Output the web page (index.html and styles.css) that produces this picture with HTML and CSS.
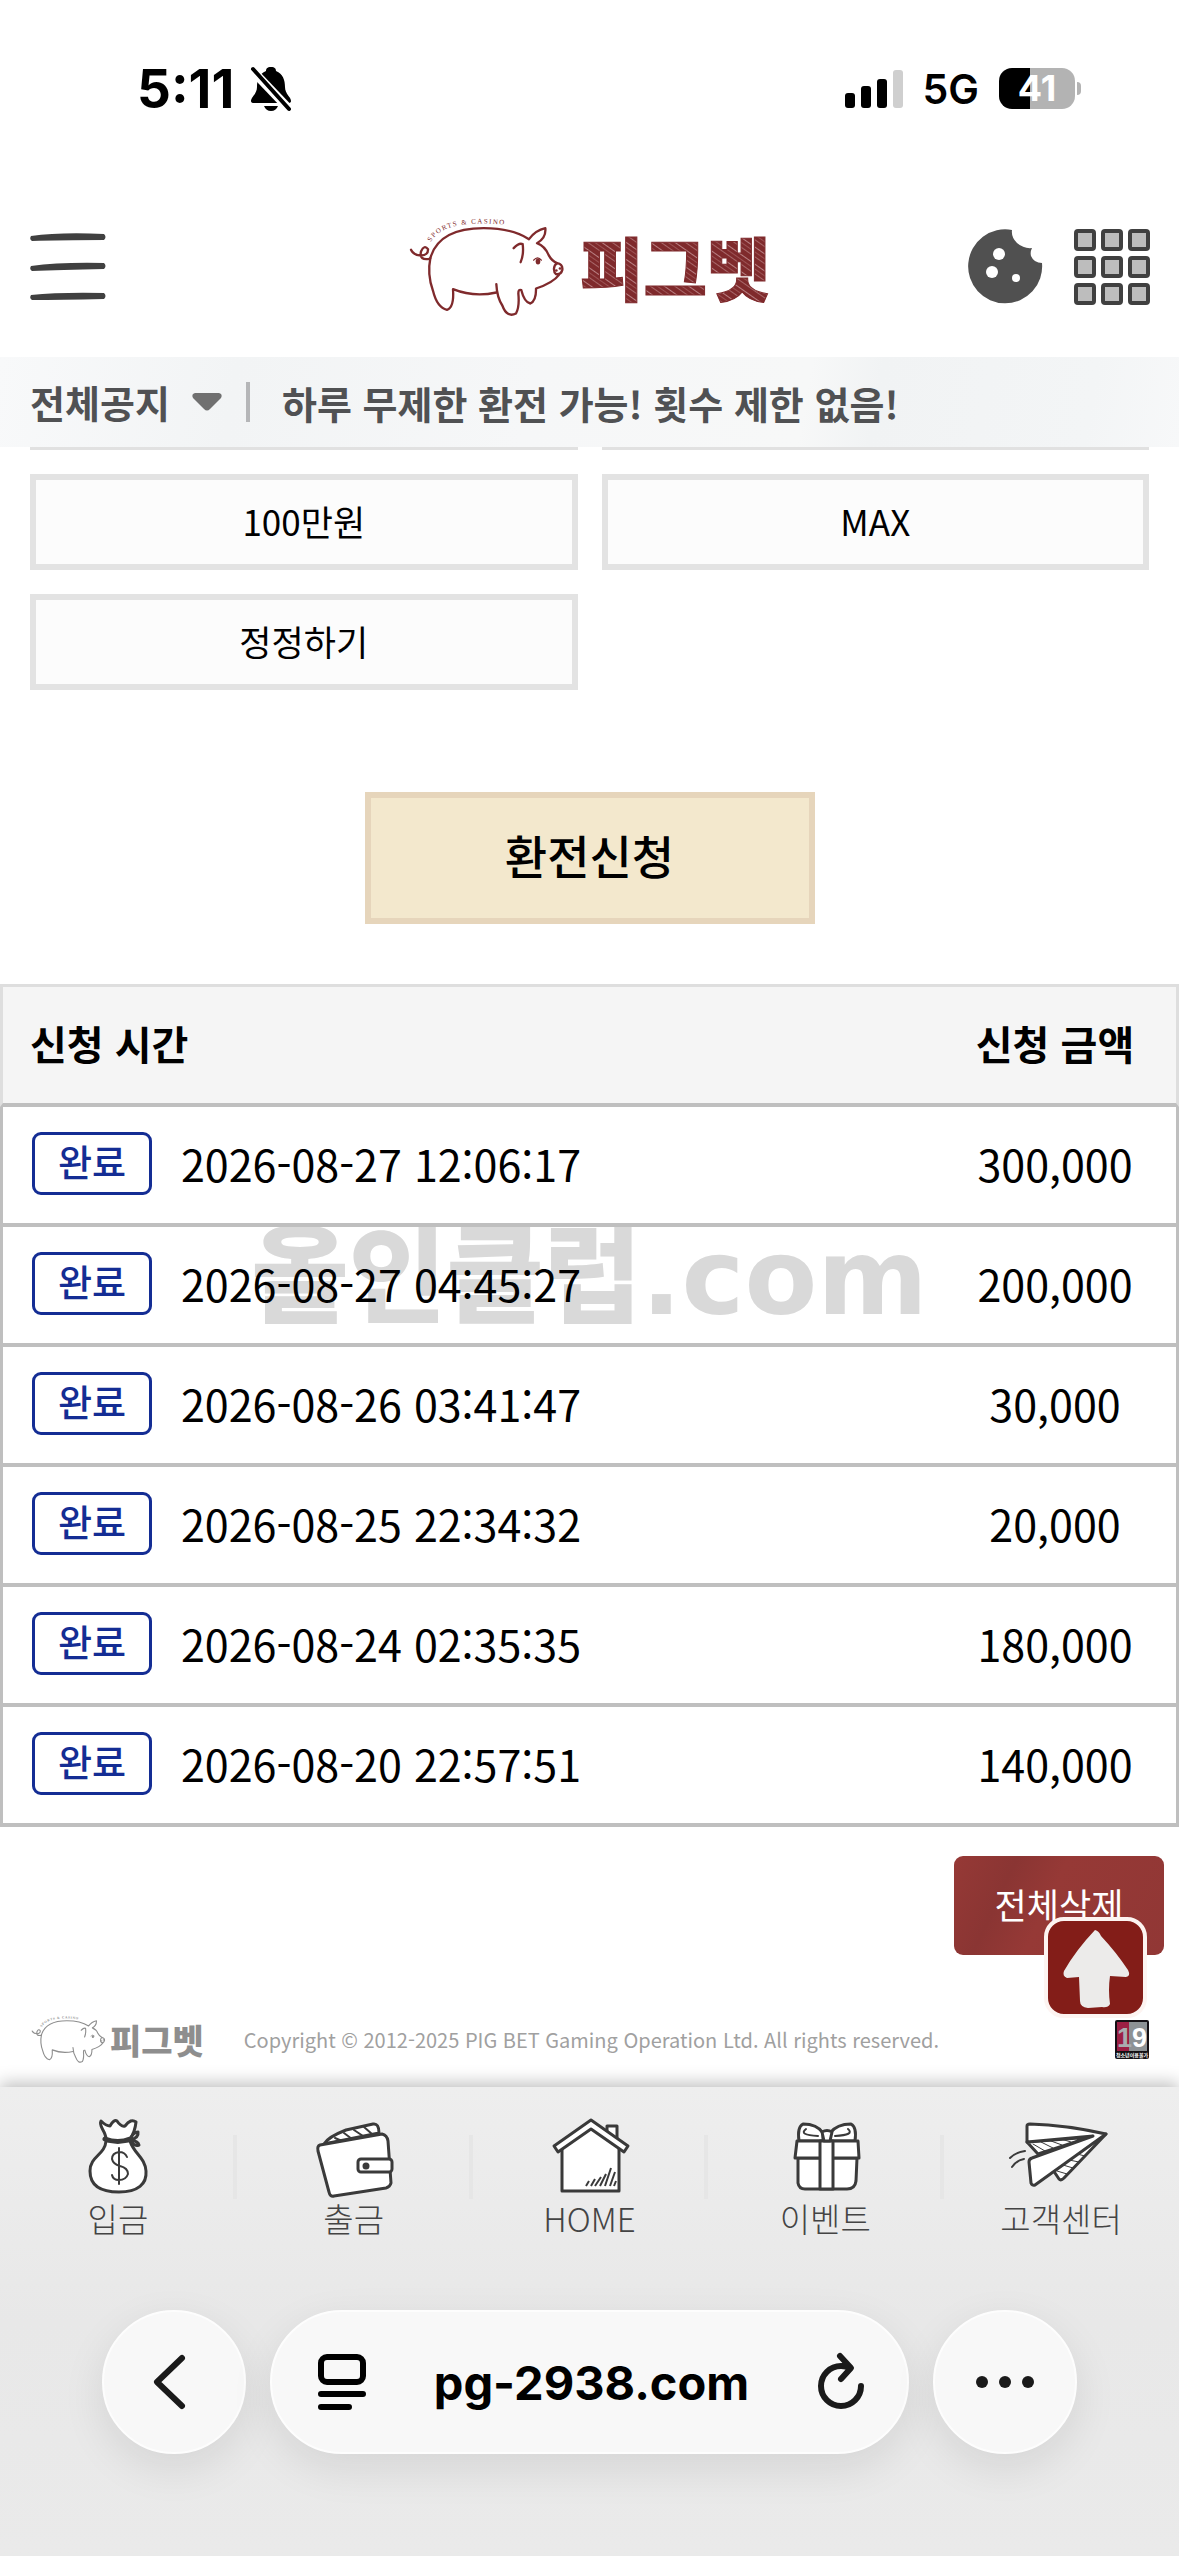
FILE: index.html
```
<!DOCTYPE html>
<html lang="ko">
<head>
    <meta charset="UTF-8">
    <meta name="viewport" content="width=device-width, initial-scale=1.0">
    <title>피그벳</title>
    <link rel="stylesheet" href="styles.css">
</head>
<body>
    <!-- shared logo drawing -->
    <svg class="defs" width="0" height="0" aria-hidden="true">
        <defs>
            <path id="backArc" d="M122 124 C150 70 240 60 360 74"/>
            <pattern id="hatch" width="14" height="14" patternUnits="userSpaceOnUse" patternTransform="rotate(35)">
                <rect width="14" height="14" fill="#7f2a2c"/>
                <rect width="14" height="1" y="2" fill="#b98083"/>
                <rect width="14" height="1" y="6" fill="#9c5254"/>
                <rect width="14" height="1" y="10" fill="#a8686a"/>
            </pattern>
            <symbol id="pig" viewBox="50 40 480 320">
                <g fill="none" stroke="currentColor" stroke-width="7" stroke-linecap="round" stroke-linejoin="round">
                    <path d="M120 172 C138 108 200 82 280 82 C335 82 385 95 416 115 Q436 88 465 82 Q468 112 440 127 Q464 136 475 163 Q484 180 500 187"/>
                    <path d="M500 187 Q518 190 516 207 Q512 222 497 220 C488 212 489 193 500 187 M506 222 Q488 246 437 263 Q438 300 420 308 Q402 304 393 268 Q384 264 384 278 Q388 318 377 338 Q350 352 336 314 Q320 290 318 250"/>
                    <path d="M318 275 Q250 290 188 265 Q192 320 170 327 Q140 320 128 270 Q110 220 120 172"/>
                    <path d="M118 174 Q86 180 92 152 Q102 130 113 145 Q114 163 92 164 Q70 164 62 147"/>
                    <path d="M370 142 Q386 125 397 130 Q401 160 391 184"/>
                    <path d="M430 178 Q442 164 453 178" stroke-width="4"/>
                </g>
                <ellipse cx="443" cy="182" rx="7" ry="9" fill="currentColor"/>
                <circle cx="498" cy="209" r="4" fill="currentColor"/>
                <circle cx="509" cy="203" r="4" fill="currentColor"/>
                <text class="arc-text" fill="currentColor"><textPath href="#backArc">SPORTS &amp; CASINO</textPath></text>
            </symbol>
        </defs>
    </svg>

    <div class="status-bar">
        <div class="status-left">
            <span>5:11</span>
            <svg width="42" height="46" viewBox="0 0 42 46">
                <path d="M21 1 C25 1 26 3 26 5 C33 8 35 14 35 21 C35 28 41 31 41 35 Q41 37 38 37 H4 Q1 37 1 35 C1 31 7 28 7 21 C7 14 9 8 16 5 C16 3 17 1 21 1Z"/>
                <path d="M14 40 H28 Q26 45 21 45 Q16 45 14 40Z"/>
                <path d="M1 3 L40 44" stroke="#fff" stroke-width="9"/>
                <path d="M3 3 L39 43" stroke="#000" stroke-width="4" stroke-linecap="round"/>
            </svg>
        </div>
        <div class="status-right">
            <svg width="58" height="38" viewBox="0 0 58 38">
                <rect x="0" y="23" width="10" height="15" rx="3"/>
                <rect x="16" y="16" width="10" height="22" rx="3"/>
                <rect x="32" y="9" width="10" height="29" rx="3"/>
                <rect x="48" y="0" width="10" height="38" rx="3" fill="#cfcfcf"/>
            </svg>
            <span class="network">5G</span>
            <div class="battery">41</div>
        </div>
    </div>

    <header class="header">
        <button class="icon-btn" aria-label="메뉴">
            <svg width="76" height="76" viewBox="0 0 76 76" fill="#404040">
                <path d="M1 7 Q30 3 74 5 Q77 8 74 11 Q30 11 2 12 Q-1 10 1 7Z"/>
                <path d="M1 37 Q30 33 74 34 Q77 37 74 40 Q30 41 2 42 Q-1 40 1 37Z"/>
                <path d="M1 66 Q30 63 74 64 Q77 67 74 70 Q30 71 2 71 Q-1 69 1 66Z"/>
            </svg>
        </button>
        <a class="logo" href="#" aria-label="피그벳">
            <svg width="160" height="107"><use href="#pig"/></svg>
            <svg width="196" height="90" viewBox="0 0 196 90">
                <text class="logo-text" x="3" y="74" fill="url(#hatch)" stroke="#7f2a2c">피그벳</text>
            </svg>
        </a>
        <div class="header-right">
            <button class="icon-btn" aria-label="쿠키">
                <svg width="76" height="76" viewBox="0 0 76 76">
                    <path d="M45 1 A37 37 0 1 0 75 34 Q67 34 64 27 Q63 23 65 19 Q57 20 50 14 Q44 8 45 1Z" fill="#505050"/>
                    <circle cx="32" cy="25" r="6" fill="#fff"/>
                    <circle cx="25" cy="43" r="6" fill="#fff"/>
                    <circle cx="49" cy="49" r="4" fill="#fff"/>
                </svg>
            </button>
            <button class="icon-btn" aria-label="전체 메뉴">
                <svg width="76" height="76" viewBox="0 0 76 76" fill="#bdbdbd" stroke="#404040" stroke-width="4">
                    <rect x="2" y="2" width="18" height="18" rx="2"/><rect x="29" y="2" width="18" height="18" rx="2"/><rect x="56" y="2" width="18" height="18" rx="2"/>
                    <rect x="2" y="29" width="18" height="18" rx="2"/><rect x="29" y="29" width="18" height="18" rx="2"/><rect x="56" y="29" width="18" height="18" rx="2"/>
                    <rect x="2" y="56" width="18" height="18" rx="2"/><rect x="29" y="56" width="18" height="18" rx="2"/><rect x="56" y="56" width="18" height="18" rx="2"/>
                </svg>
            </button>
        </div>
    </header>

    <div class="notice">
        <select class="notice-select" aria-label="공지 종류">
            <option>전체공지</option>
        </select>
        <svg width="30" height="18" viewBox="0 0 30 18"><path d="M3 0 H27 Q31 1 29 5 L18 16 Q15 19 12 16 L1 5 Q-1 1 3 0Z" fill="#707070"/></svg>
        <span class="notice-line"></span>
        <span class="notice-text">하루 무제한 환전 가능! 횟수 제한 없음!</span>
    </div>

    <main>
        <div class="amounts">
            <span class="cut"></span>
            <span class="cut"></span>
            <button class="amount-btn">100만원</button>
            <button class="amount-btn">MAX</button>
            <button class="amount-btn">정정하기</button>
        </div>

        <button class="submit-btn">환전신청</button>

        <div class="history">
            <div class="watermark" aria-hidden="true">올인클럽<span>.com</span></div>
            <table>
                <thead>
                    <tr><th>신청 시간</th><th class="money">신청 금액</th></tr>
                </thead>
                <tbody>
                    <tr><td><div class="when"><span class="badge">완료</span>2026-08-27 12:06:17</div></td><td class="money">300,000</td></tr>
                    <tr><td><div class="when"><span class="badge">완료</span>2026-08-27 04:45:27</div></td><td class="money">200,000</td></tr>
                    <tr><td><div class="when"><span class="badge">완료</span>2026-08-26 03:41:47</div></td><td class="money">30,000</td></tr>
                    <tr><td><div class="when"><span class="badge">완료</span>2026-08-25 22:34:32</div></td><td class="money">20,000</td></tr>
                    <tr><td><div class="when"><span class="badge">완료</span>2026-08-24 02:35:35</div></td><td class="money">180,000</td></tr>
                    <tr><td><div class="when"><span class="badge">완료</span>2026-08-20 22:57:51</div></td><td class="money">140,000</td></tr>
                </tbody>
            </table>
        </div>

        <div class="actions">
            <button class="delete-btn">전체삭제</button>
            <button class="top-btn" aria-label="맨 위로">
                <svg width="68" height="80" viewBox="0 0 68 80"><path d="M33 2 Q37 3 39 8 Q54 24 66 42 Q69 48 64 49 L48 48 Q46 62 48 76 Q46 80 40 79 L26 80 Q18 79 18 73 L17 49 L5 50 Q0 48 2 43 Q14 22 33 2Z" fill="#ecebea"/></svg>
            </button>
        </div>
    </main>

    <footer class="footer">
        <div class="footer-logo">
            <svg width="77" height="51"><use href="#pig"/></svg>
            <span>피그벳</span>
        </div>
        <p>Copyright © 2012-2025 PIG BET Gaming Operation Ltd. All rights reserved.</p>
        <svg width="34" height="39" viewBox="0 0 34 39">
            <rect width="34" height="39" rx="2" fill="#141014"/>
            <rect x="2" y="2" width="12" height="29" fill="#9c1f44"/>
            <rect x="14" y="2" width="18" height="29" fill="#8d9295"/>
            <text class="adult-num" x="17" y="27" text-anchor="middle"><tspan fill="#a9adaf">1</tspan><tspan fill="#fff">9</tspan></text>
            <text class="adult-text" x="17" y="37" fill="#fff" text-anchor="middle">청소년이용불가</text>
        </svg>
    </footer>

    <div class="bottom">
        <nav class="tabs">
            <a href="#">
                <svg width="100" height="84" viewBox="0 0 100 84" fill="#fff" stroke="#3a3a3a" stroke-width="3" stroke-linecap="round" stroke-linejoin="round">
                    <path d="M38 26 C38 18 30 13 33 8 Q38 13 42 13 Q46 6 49 8 Q53 14 57 13 Q63 5 68 9 Q67 19 62 26"/>
                    <path d="M38 28 C37 42 22 43 22 58 C22 74 35 79 51 79 C70 79 79 71 78 58 C77 44 66 41 62 28Z"/>
                    <path d="M37 26 Q50 31 62 26" fill="none" stroke-width="5"/>
                    <path d="M62 27 Q65 19 70 19 Q71 25 62 27 Q70 28 71 32 Q66 34 62 27Z"/>
                    <path d="M59 44 Q57 39 51 39 Q44 40 44 46 Q45 51 52 53 Q60 55 60 61 Q58 67 51 67 Q45 67 44 62 M51 35 V71" fill="none" stroke-width="2"/>
                </svg>
                입금
            </a>
            <a href="#">
                <svg width="100" height="84" viewBox="0 0 100 84" fill="#fff" stroke="#3a3a3a" stroke-width="3" stroke-linecap="round" stroke-linejoin="round">
                    <path d="M20 31 Q24 24 42 17 L69 11 Q75 10 75 20Z"/>
                    <path d="M31 25 L38 28 M40 20 L48 26 M50 17 L59 23 M60 14 L68 21" stroke-width="2"/>
                    <path d="M16 32 L78 21 Q83 22 84 28 L87 70 Q86 74 82 75 L30 83 Q26 84 25 79 L14 38 Q13 33 16 32Z"/>
                    <rect x="54" y="46" width="34" height="13" rx="3"/>
                    <circle cx="62" cy="53" r="2" fill="#3a3a3a"/>
                </svg>
                출금
            </a>
            <a href="#">
                <svg width="100" height="84" viewBox="0 0 100 84" fill="#fff" stroke="#3a3a3a" stroke-width="3" stroke-linejoin="round">
                    <path d="M23 34 V78 H80 V34 L52 12Z"/>
                    <path d="M68 26 V13 H78 V30"/>
                    <path d="M52 7 L89 33 L85 39 L52 16 L19 39 L15 33Z"/>
                    <path d="M47 73 L50 68 M52 73 L56 66 M56 73 L62 64 M61 73 L67 61 M66 73 L72 55 M71 73 L76 59 M75 73 L77 68" stroke-width="2"/>
                </svg>
                HOME
            </a>
            <a href="#">
                <svg width="100" height="84" viewBox="0 0 100 84" fill="#fff" stroke="#3a3a3a" stroke-width="3" stroke-linecap="round" stroke-linejoin="round">
                    <path d="M24 28 Q22 14 28 11 Q42 11 48 20 V28Z M80 28 Q82 14 76 11 Q62 11 55 20 V28Z"/>
                    <path d="M31 16 Q23 22 43 23 M73 16 Q80 22 60 23" fill="none" stroke-width="2"/>
                    <path d="M23 45 V70 Q24 76 30 76 H72 Q80 76 81 68 L82 45Z"/>
                    <path d="M22 28 H83 L84 45 H20Z"/>
                    <path d="M45 28 H58 V76 H45Z"/>
                    <path d="M47 19 Q52 16 57 19 L55 28 H49Z"/>
                </svg>
                이벤트
            </a>
            <a href="#">
                <svg width="100" height="84" viewBox="0 0 100 84" fill="#fff" stroke="#3a3a3a" stroke-width="3" stroke-linecap="round" stroke-linejoin="round">
                    <path d="M42 57 L48 66 Q50 68 53 65 L95 21Z"/>
                    <path d="M46 58 L56 61 M52 52 L62 55 M58 47 L68 49 M66 41 L74 43" stroke-width="1"/>
                    <path d="M16 29 L27 41 L80 24Z"/>
                    <path d="M22 31 L34 38 M30 29 L42 35 M40 28 L51 32 M50 26 L60 29" stroke-width="1"/>
                    <path d="M16 13 Q16 11 19 11 Q55 12 95 21 L24 72 Q21 73 20 70 L18 49 Q18 46 21 45 L82 23 L16 29Z"/>
                    <path d="M-1 45 Q5 39 14 38 M1 54 Q6 47 13 46" fill="none" stroke-width="2"/>
                </svg>
                고객센터
            </a>
        </nav>

        <div class="toolbar">
            <button class="round-btn" aria-label="뒤로">
                <svg width="60" height="60" viewBox="0 0 60 60" fill="none" stroke="#1a1a1a" stroke-width="6" stroke-linecap="round" stroke-linejoin="round"><path d="M38 6 L13 30 L38 54"/></svg>
            </button>
            <div class="address">
                <svg width="48" height="56" viewBox="0 0 48 56" fill="none" stroke="#000" stroke-width="6" stroke-linecap="round">
                    <rect x="3" y="3" width="42" height="25" rx="6"/>
                    <path d="M3 40 H45 M3 53 H31"/>
                </svg>
                <input type="text" value="pg-2938.com" aria-label="주소">
                <button class="icon-btn" aria-label="새로고침">
                    <svg width="48" height="56" viewBox="0 0 48 56" fill="none" stroke="#1a1a1a" stroke-width="6" stroke-linecap="round" stroke-linejoin="round"><path d="M33 14 Q29 12 24 12 A20 20 0 1 0 44 32 M23 2 L34 14 L24 25"/></svg>
                </button>
            </div>
            <button class="round-btn" aria-label="더보기">
                <svg width="72" height="14" viewBox="0 0 72 14" fill="#1a1a1a"><circle cx="13" cy="7" r="6"/><circle cx="36" cy="7" r="6"/><circle cx="59" cy="7" r="6"/></svg>
            </button>
        </div>
    </div>
</body>
</html>
```

FILE: styles.css
```
* {
    box-sizing: border-box;
}
body {
    display: flex;
    flex-direction: column;
    min-height: 100vh;
    margin: 0;
    background: #fff;
    color: #000;
    font-family: "Noto Sans CJK KR", sans-serif;
}
button {
    padding: 0;
    border: 0;
    background: none;
    color: inherit;
    font-family: inherit;
    cursor: pointer;
}
a {
    color: inherit;
    text-decoration: none;
}
svg {
    display: block;
    flex: none;
    overflow: visible;
}
.defs {
    position: absolute;
}

/* status bar */
.status-bar {
    display: flex;
    justify-content: space-between;
    align-items: center;
    height: 177px;
    padding: 0 104px 0 137px;
    font-family: Inter, sans-serif;
    font-weight: 700;
}
.status-left,
.status-right {
    display: flex;
    align-items: center;
}
.status-left {
    gap: 16px;
    font-size: 53px;
}
.status-right {
    gap: 20px;
}
.network {
    font-size: 41px;
    font-weight: 600;
}
.battery {
    position: relative;
    width: 76px;
    height: 41px;
    border-radius: 13px;
    background: linear-gradient(90deg, #000 41%, #b3b3b3 41%);
    color: #fff;
    font-size: 36px;
    line-height: 41px;
    text-align: center;
}
.battery::after {
    content: "";
    position: absolute;
    top: 14px;
    right: -6px;
    width: 4px;
    height: 13px;
    border-radius: 0 4px 4px 0;
    background: #b3b3b3;
}

/* header */
.header {
    display: grid;
    grid-template-columns: 1fr auto 1fr;
    align-items: center;
    height: 180px;
    padding: 0 29px 0 30px;
}
.icon-btn {
    justify-self: start;
}
.logo {
    display: flex;
    align-items: center;
    gap: 10px;
    color: #7f2a2c;
}
.logo-text {
    font-size: 69px;
    font-weight: 900;
    stroke-width: 1px;
}
.arc-text {
    font-family: "Liberation Serif", serif;
    font-size: 21px;
    letter-spacing: 4px;
}
.header-right {
    display: flex;
    justify-content: flex-end;
    gap: 31px;
}

/* notice */
.notice {
    display: flex;
    align-items: center;
    height: 90px;
    padding: 0 30px;
    background: linear-gradient(100deg, #f8f9fa 0%, #f2f4f5 20%, #f6f7f8 45%, #f7f8f8 68%, #f1f3f4 74%, #f3f5f6 92%, #f7f8f9 100%);
    color: #505153;
    font-size: 38px;
    font-weight: 700;
}
.notice-select {
    appearance: none;
    margin-right: 22px;
    padding: 0 0 2px;
    border: 0;
    background: none;
    color: inherit;
    font: inherit;
}
.notice-line {
    width: 4px;
    height: 40px;
    margin: 0 32px 0 24px;
    background: #b5b6b8;
}

/* withdrawal form */
.amounts {
    display: grid;
    grid-template-columns: 1fr 1fr;
    gap: 24px;
    padding: 0 30px;
}
.cut {
    height: 3px;
    background: #e1e1e1;
}
.amount-btn {
    height: 96px;
    padding: 0 0 4px;
    border: 6px solid #e3e3e3;
    background: #fcfcfc;
    font-size: 35px;
}
.submit-btn {
    display: block;
    width: 450px;
    height: 132px;
    margin: 102px auto 60px;
    padding: 0 0 8px;
    border: 6px solid #e6d5bb;
    background: #f3e8cd;
    font-size: 46px;
    font-weight: 500;
}

/* history table */
.history {
    position: relative;
}
.watermark {
    position: absolute;
    top: 214px;
    left: 0;
    right: 0;
    display: flex;
    justify-content: center;
    align-items: baseline;
    color: #d9d9d9;
    font-size: 106px;
    font-weight: 900;
    line-height: 140px;
}
.watermark span {
    font-family: "DejaVu Sans", sans-serif;
    font-weight: 700;
}
table {
    position: relative;
    width: 100%;
    border-collapse: separate;
    border-spacing: 0;
}
th {
    height: 123px;
    padding: 0 0 4px 27px;
    border-top: 3px solid #dedede;
    border-bottom: 4px solid #bfbfbf;
    background: #f5f5f5;
    font-size: 40px;
    font-weight: 700;
    text-align: left;
}
td {
    height: 120px;
    padding: 0 0 4px 29px;
    border-bottom: 4px solid #bfbfbf;
    font-size: 43px;
    line-height: 58px;
}
th:first-child {
    border-left: 3px solid #dedede;
}
th:last-child {
    border-right: 3px solid #dedede;
}
td:first-child {
    border-left: 3px solid #bfbfbf;
}
td:last-child {
    border-right: 3px solid #bfbfbf;
}
.money {
    width: 245px;
    padding-left: 0;
    text-align: center;
}
.when {
    display: flex;
    align-items: center;
    gap: 29px;
}
.badge {
    width: 120px;
    height: 63px;
    border: 3px solid #142d94;
    border-radius: 9px;
    color: #142d94;
    font-size: 37px;
    font-weight: 500;
    line-height: 53px;
    text-align: center;
}

/* delete and scroll-to-top */
.actions {
    position: relative;
    display: flex;
    justify-content: flex-end;
    padding: 29px 15px 0;
}
.delete-btn {
    width: 210px;
    height: 99px;
    padding: 0 0 4px;
    border-radius: 9px;
    background: linear-gradient(115deg, #963936 0%, #8a3533 25%, #963936 45%, #913735 100%);
    color: #fff;
    font-size: 35px;
}
.top-btn {
    position: absolute;
    top: 90px;
    right: 32px;
    display: flex;
    justify-content: center;
    align-items: center;
    width: 103px;
    height: 101px;
    border: 4px solid #fdf4f1;
    border-radius: 20px;
    background: #831d18;
}

/* footer */
.footer {
    display: flex;
    align-items: center;
    padding: 59px 30px 22px;
    color: #a0a0a0;
    font-size: 20px;
}
.footer p {
    flex: 1;
    margin: 0 0 0 40px;
}
.footer-logo {
    display: flex;
    align-items: center;
    gap: 3px;
    color: #8e8e8e;
    font-size: 34px;
    font-weight: 900;
    line-height: 50px;
}
.adult-num {
    font-family: "Liberation Sans", sans-serif;
    font-size: 27px;
    font-weight: 700;
}
.adult-text {
    font-size: 5px;
    font-weight: 700;
}

/* bottom area */
.bottom {
    flex: 1;
    background: linear-gradient(#eee, #e8e8e8 50%, #eaeaea);
    box-shadow: 0 -4px 16px rgba(0, 0, 0, 0.25);
}
.tabs {
    display: flex;
    padding-top: 26px;
}
.tabs a {
    position: relative;
    display: flex;
    flex: 1;
    flex-direction: column;
    align-items: center;
    color: #444;
    font-size: 33px;
    font-weight: 300;
    line-height: 42px;
}
.tabs a + a::before {
    content: "";
    position: absolute;
    top: 22px;
    left: -3px;
    width: 4px;
    height: 64px;
    background: #e6e6e6;
}
.toolbar {
    display: flex;
    gap: 24px;
    padding: 71px 102px 102px;
}
.round-btn,
.address {
    display: flex;
    justify-content: center;
    align-items: center;
    height: 144px;
    border: 2px solid #fdfdfd;
    border-radius: 72px;
    background: #f8f8f8;
    box-shadow: 0 14px 44px rgba(0, 0, 0, 0.09);
}
.round-btn {
    flex: none;
    width: 144px;
}
.address {
    flex: 1;
    min-width: 0;
    padding: 0 42px 0 46px;
}
.address input {
    flex: 1;
    min-width: 0;
    padding: 0;
    border: 0;
    background: none;
    font-family: Inter, sans-serif;
    font-size: 47px;
    font-weight: 700;
    text-align: center;
}
```
